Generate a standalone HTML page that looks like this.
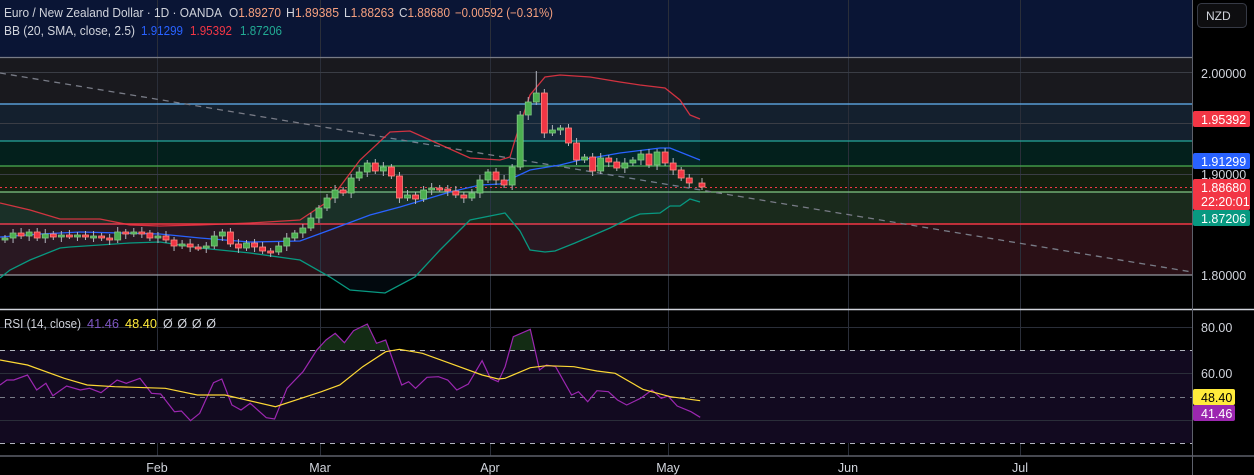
<!DOCTYPE html>
<html><head><meta charset="utf-8">
<style>
html,body{margin:0;padding:0;background:#000;width:1254px;height:475px;overflow:hidden;font-family:"Liberation Sans",sans-serif;}
svg{display:block}
text{font-family:"Liberation Sans",sans-serif;}
</style></head><body>
<svg id="s" width="1254" height="475" viewBox="0 0 1254 475" xmlns="http://www.w3.org/2000/svg">
<rect x="0" y="0" width="1254" height="475" fill="#000"/>
<rect x="0" y="0" width="1192" height="57" fill="#0a1535"/>
<rect x="0" y="57" width="1192" height="47" fill="#19191e"/>
<rect x="0" y="104" width="1192" height="37" fill="#14202e"/>
<rect x="0" y="141" width="1192" height="25" fill="#03201c"/>
<rect x="0" y="166" width="1192" height="26" fill="#14200f"/>
<rect x="0" y="192" width="1192" height="32" fill="#1a2a1c"/>
<rect x="0" y="224" width="1192" height="51" fill="#2a1016"/>
<g stroke="#2a2e39" stroke-width="1">
<line x1="157.5" y1="0" x2="157.5" y2="456"/><line x1="320.5" y1="0" x2="320.5" y2="456"/>
<line x1="490.5" y1="0" x2="490.5" y2="456"/><line x1="668.5" y1="0" x2="668.5" y2="456"/>
<line x1="848.5" y1="0" x2="848.5" y2="456"/><line x1="1020.5" y1="0" x2="1020.5" y2="456"/>
<line x1="0" y1="72.5" x2="1192" y2="72.5" stroke="#3a3d45"/><line x1="0" y1="123.5" x2="1192" y2="123.5" stroke="#3a3d45"/>
<line x1="0" y1="174.5" x2="1192" y2="174.5" stroke="#3a3d45"/>
</g>
<g stroke-width="1.2">
<line x1="0" y1="57.5" x2="1192" y2="57.5" stroke="#787b86"/>
<line x1="0" y1="104" x2="1192" y2="104" stroke="#64b5f6"/>
<line x1="0" y1="141" x2="1192" y2="141" stroke="#26a69a"/>
<line x1="0" y1="166" x2="1192" y2="166" stroke="#4caf50"/>
<line x1="0" y1="192" x2="1192" y2="192" stroke="#81c784"/>
<line x1="0" y1="224" x2="1192" y2="224" stroke="#f23645" stroke-width="1.6"/>
<line x1="0" y1="275" x2="1192" y2="275" stroke="#9598a1"/>
</g>
<line x1="0" y1="73" x2="1192" y2="272" stroke="#787b86" stroke-width="1.3" stroke-dasharray="6 5"/>
<line x1="0" y1="187.5" x2="1192" y2="187.5" stroke="#f23645" stroke-width="1" stroke-dasharray="2 3"/>
<g id="bb"></g>
<g id="cd"></g>
<line x1="0" y1="309.5" x2="1254" y2="309.5" stroke="#d1d4dc" stroke-width="1.5"/>
<rect x="0" y="350" width="1192" height="93" fill="#120a20"/>
<g stroke="#2a2e39"><line x1="0" y1="327.5" x2="1192" y2="327.5"/><line x1="0" y1="373.5" x2="1192" y2="373.5"/><line x1="0" y1="420.5" x2="1192" y2="420.5"/></g>
<g stroke="#b2b5be" stroke-dasharray="5 5" stroke-width="1"><line x1="0" y1="350.5" x2="1192" y2="350.5"/><line x1="0" y1="443.5" x2="1192" y2="443.5"/></g>
<line x1="0" y1="397.5" x2="1192" y2="397.5" stroke="#787b86" stroke-dasharray="5 5"/>
<g id="rsi"></g>
<line x1="0" y1="456" x2="1254" y2="456" stroke="#5d606b" stroke-width="1.5"/>
<line x1="1192.5" y1="0" x2="1192.5" y2="475" stroke="#5d606b"/>
<g font-size="12.5">
<text x="4" y="17" fill="#d1d4dc" textLength="218" lengthAdjust="spacingAndGlyphs">Euro / New Zealand Dollar · 1D · OANDA</text>
<text x="229" y="17" fill="#d1d4dc" textLength="52" lengthAdjust="spacingAndGlyphs">O<tspan fill="#f7a17f">1.89270</tspan></text>
<text x="286" y="17" fill="#d1d4dc" textLength="53" lengthAdjust="spacingAndGlyphs">H<tspan fill="#f7a17f">1.89385</tspan></text>
<text x="344" y="17" fill="#d1d4dc" textLength="50" lengthAdjust="spacingAndGlyphs">L<tspan fill="#f7a17f">1.88263</tspan></text>
<text x="399" y="17" fill="#d1d4dc" textLength="51" lengthAdjust="spacingAndGlyphs">C<tspan fill="#f7a17f">1.88680</tspan></text>
<text x="455" y="17" fill="#f7a17f" textLength="98" lengthAdjust="spacingAndGlyphs">−0.00592 (−0.31%)</text>
<text x="4" y="35" fill="#d1d4dc" textLength="131" lengthAdjust="spacingAndGlyphs">BB (20, SMA, close, 2.5)</text>
<text x="141" y="35" fill="#2962ff" textLength="42" lengthAdjust="spacingAndGlyphs">1.91299</text>
<text x="190" y="35" fill="#f23645" textLength="42" lengthAdjust="spacingAndGlyphs">1.95392</text>
<text x="240" y="35" fill="#22ab94" textLength="42" lengthAdjust="spacingAndGlyphs">1.87206</text>
<text x="4" y="328" fill="#d1d4dc" textLength="77" lengthAdjust="spacingAndGlyphs">RSI (14, close)</text>
<text x="87" y="328" fill="#7e57c2" textLength="32" lengthAdjust="spacingAndGlyphs">41.46</text>
<text x="125" y="328" fill="#ffeb3b" textLength="32" lengthAdjust="spacingAndGlyphs">48.40</text>
<text x="163" y="328" fill="#d1d4dc" textLength="53" lengthAdjust="spacing">Ø Ø Ø Ø</text>
</g>
<rect x="1197.5" y="3.5" width="49" height="24" rx="4" fill="#0e0e10" stroke="#363a45"/>
<text x="1206" y="20" font-size="12" fill="#d1d4dc">NZD</text>
<g font-size="12.5" fill="#d1d4dc">
<text x="1201" y="78">2.00000</text><text x="1201" y="179">1.90000</text><text x="1201" y="280">1.80000</text>
<text x="1201" y="332">80.00</text><text x="1201" y="378">60.00</text>
</g>
<rect x="1193" y="111" width="57" height="16" rx="2" fill="#f23645"/><text x="1201" y="124" font-size="12.5" fill="#fff">1.95392</text>
<rect x="1193" y="153" width="57" height="16" rx="2" fill="#2962ff"/><text x="1201" y="166" font-size="12.5" fill="#fff">1.91299</text>
<rect x="1193" y="179" width="57" height="31" rx="2" fill="#f23645"/><text x="1201" y="192" font-size="12.5" fill="#fff">1.88680</text><text x="1201" y="206" font-size="12.5" fill="#fff">22:20:01</text>
<rect x="1193" y="210" width="57" height="16" rx="2" fill="#089981"/><text x="1201" y="223" font-size="12.5" fill="#fff">1.87206</text>
<rect x="1193" y="389" width="42" height="16" rx="2" fill="#ffeb3b"/><text x="1201" y="402" font-size="12.5" fill="#000">48.40</text>
<rect x="1193" y="405" width="42" height="16" rx="2" fill="#9c27b0"/><text x="1201" y="418" font-size="12.5" fill="#fff">41.46</text>
<g font-size="12.5" fill="#d1d4dc" text-anchor="middle">
<text x="157" y="472">Feb</text><text x="320" y="472">Mar</text><text x="490" y="472">Apr</text><text x="668" y="472">May</text><text x="848" y="472">Jun</text><text x="1020" y="472">Jul</text>
</g>
</svg>
<script>
var NS="http://www.w3.org/2000/svg";
function el(p,t,a){var e=document.createElementNS(NS,t);for(var k in a)e.setAttribute(k,a[k]);p.appendChild(e);return e;}
function pts(a){return a.map(function(p){return p[0]+","+p[1]}).join(" ");}
var up=[[0,203],[30,210],[60,219],[100,219],[130,225],[160,226],[200,225],[250,223],[300,220],[330,200],[360,160],[390,132],[410,131],[430,140],[470,158],[500,160],[510,157],[515,140],[530,95],[545,77],[560,75],[590,77],[620,82],[640,85],[665,88],[680,100],[690,115],[700,119]];
var mid=[[0,237],[40,234],[80,232],[160,234],[200,238],[250,242],[300,241],[330,230],[370,215],[400,207],[450,192],[480,185],[500,184],[530,170],[560,165],[580,160],[620,153],[660,148],[670,148],[700,160]];
var lo=[[0,278],[10,270],[30,260],[60,248],[70,247],[130,243],[160,242],[200,248],[250,253],[300,260],[330,277],[350,290],[385,293],[415,277],[440,250],[470,220],[500,214],[505,213],[520,231],[530,250],[545,252],[555,251],[575,243],[610,228],[630,218],[640,214],[660,213],[670,206],[680,206],[690,199],[700,202]];
var bb=document.getElementById("bb");
el(bb,"polygon",{points:pts(up.concat(lo.slice().reverse())),fill:"rgba(33,150,243,0.06)"});
el(bb,"polyline",{points:pts(up),fill:"none",stroke:"#f23645","stroke-width":1.3,opacity:.85});
el(bb,"polyline",{points:pts(mid),fill:"none",stroke:"#2962ff","stroke-width":1.3});
el(bb,"polyline",{points:pts(lo),fill:"none",stroke:"#089981","stroke-width":1.3});
var c=[238,233,236,232,238,234,237,235,236,235,237,236,238,240,232,234,232,233,238,236,240,246,244,247,248,246,236,232,244,248,243,247,251,252,246,238,233,228,218,208,198,190,193,178,172,163,171,167,176,198,195,199,190,188,189,191,195,198,193,180,172,180,185,167,115,102,93,133,130,128,143,160,157,171,158,162,168,163,160,154,165,152,163,170,178,183,187];
var cd=document.getElementById("cd");var o=240;
for(var i=0;i<c.length;i++){var x=5+i*8.05,cl=c[i];if(i==c.length-1)x=702;
var g=cl<o,col=g?"#4caf50":"#f23645";var t=Math.min(o,cl),b=Math.max(o,cl);var h=t-3-(i%3),l=b+3+(i%2)*2;
if(i==66)h=71;
el(cd,"line",{x1:x,y1:h,x2:x,y2:l,stroke:"#b2b5be","stroke-width":1});
var hh=Math.max(b-t,2);el(cd,"rect",{x:x-3,y:t,width:6,height:hh,fill:col,stroke:g?"#81c784":"#ff8a80","stroke-width":.8});o=cl;}
var r=document.getElementById("rsi");
function conv(a){return a.map(function(p){return [(p[0]/2.178).toFixed(1),(300+p[1]/3).toFixed(1)]});}
var rs=conv([[0,255],[15,240],[30,240],[60,225],[80,270],[100,250],[115,287],[145,258],[175,270],[195,265],[220,278],[255,240],[275,250],[305,235],[330,280],[350,282],[380,335],[395,333],[415,362],[435,340],[465,248],[483,237],[505,315],[525,330],[545,310],[580,353],[598,357],[625,265],[660,215],[690,150],[710,120],[730,100],[750,128],[770,92],[800,72],[820,130],[840,120],[875,255],[890,245],[905,265],[930,232],[955,230],[975,240],[995,270],[1020,252],[1050,182],[1068,235],[1085,245],[1100,200],[1118,110],[1155,88],[1175,210],[1190,195],[1210,200],[1245,285],[1260,275],[1280,305],[1300,272],[1325,275],[1345,300],[1365,315],[1395,295],[1420,270],[1440,295],[1455,288],[1475,318],[1505,335],[1525,352]]);
var ma=conv([[0,180],[60,195],[140,235],[190,255],[250,260],[360,265],[430,285],[490,285],[600,320],[700,275],[740,255],[790,200],[840,155],[870,148],[920,160],[980,190],[1050,225],[1085,237],[1100,235],[1155,203],[1190,197],[1250,200],[1300,213],[1340,220],[1400,268],[1460,290],[1525,302]]);
el(r,"polygon",{points:pts(conv([[690,150],[710,120],[730,100],[750,128],[770,92],[800,72],[820,130],[840,120],[850,150]])),fill:"rgba(76,175,80,0.25)"});
el(r,"polygon",{points:pts(conv([[1110,150],[1118,110],[1155,88],[1166,150]])),fill:"rgba(76,175,80,0.25)"});
el(r,"polyline",{points:pts(rs),fill:"none",stroke:"#9c27b0","stroke-width":1.2});
el(r,"polyline",{points:pts(ma),fill:"none",stroke:"#fdd835","stroke-width":1.2});
</script>
</body></html>
